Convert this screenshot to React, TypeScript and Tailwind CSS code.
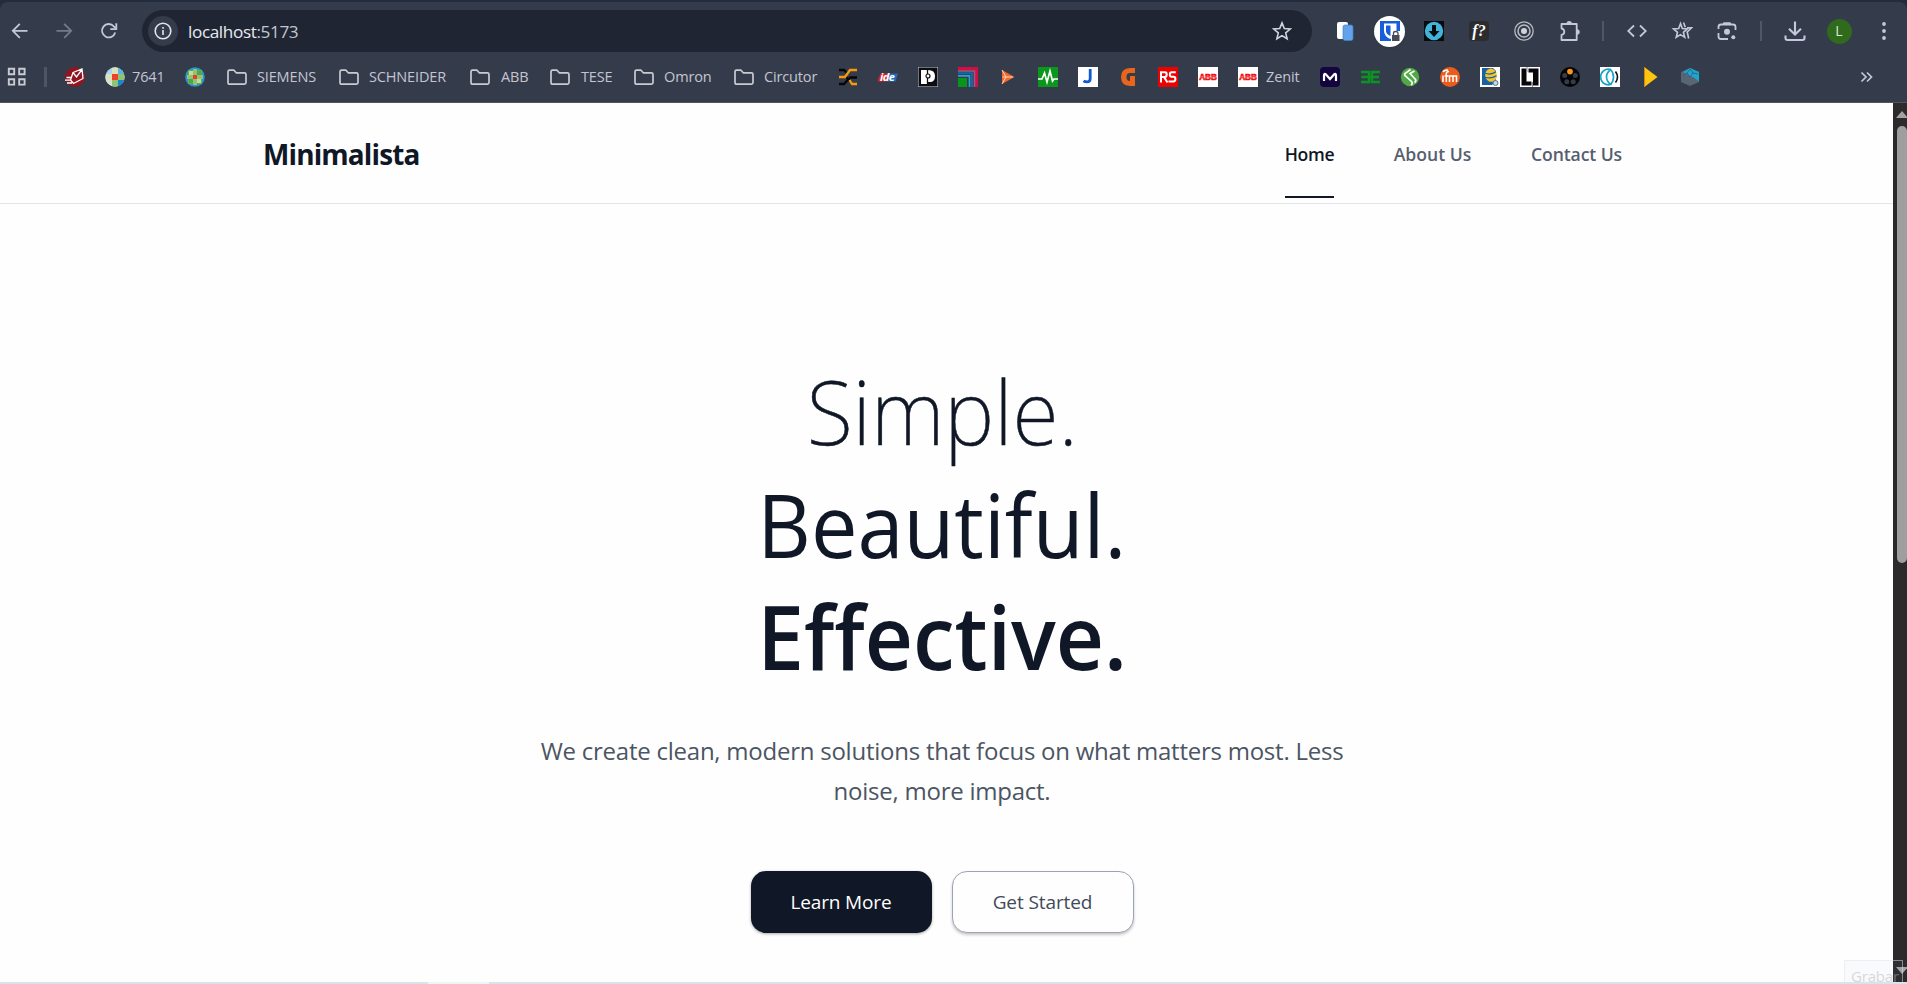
import type { ReactNode } from "react";

function Icon({ children, size = "size-5", box = "0 0 20 20" }: { children: ReactNode; size?: string; box?: string }) {
  return (
    <svg viewBox={box} className={`${size} shrink-0`} fill="none">
      {children}
    </svg>
  );
}

const pale = "#c3c8dc";
const soft = "#c9cbd2";

function FolderIcon() {
  return (
    <Icon>
      <path d="M1 14.8V4.8Q1 3.2 2.6 3.2H7l2.2 2.6h8.2Q19 5.8 19 7.4v8.2q0 1.6-1.6 1.6H2.6Q1 17.2 1 15.6z" stroke={soft} strokeWidth="1.7" strokeLinejoin="round" />
    </Icon>
  );
}

function MailBadge() {
  return (
    <Icon>
      <circle cx="10" cy="10" r="10" fill="#8f1620" />
      <path d="M8 5.500l9-3.500 1 9.500-9.500 5-3-3.500zM8 5.500l3.500 4.500L17 2.500M1.500 10.500h5M0 13.200h6M2 16h5" stroke="#fff" strokeWidth="1.3" />
    </Icon>
  );
}

function MosaicGlobe() {
  return (
    <Icon>
      <clipPath id="g1"><circle cx="10" cy="10" r="9.700" /></clipPath>
      <g clipPath="url(#g1)">
        <path d="M0 0h20v20H0z" fill="#a9d5f2" />
        <path d="M7 0h6v7H7zM0 7h7v6H0z" fill="#d9e2bd" />
        <path d="M13 0h7v7h-7z" fill="#58b5de" />
        <path d="M13 7h7v6h-7zM7 13h6v7H7z" fill="#8fc475" />
        <path d="M0 13h7v7H0z" fill="#d3e5cf" />
        <path d="M13 13h7v7h-7z" fill="#1688d2" />
        <path d="M7 7h6v6H7z" fill="#f0402c" />
      </g>
    </Icon>
  );
}

function GreenGlobe() {
  return (
    <Icon>
      <clipPath id="g2"><circle cx="10" cy="10" r="9.800" /></clipPath>
      <g clipPath="url(#g2)">
        <path d="M0 0h20v20H0z" fill="#2b93d4" />
        <path d="M3 3h14v14H3z" fill="#62ae4c" />
        <path d="M8 2h4v16H8zM2 8h16v4H2z" fill="#8fc475" />
        <path d="M4 4h4v4H4zM12 12h4v4h-4z" fill="#c5d9a0" />
        <path d="M4 12h4v4H4zM12 4h4v4h-4z" fill="#4fa548" />
        <path d="M8 8h4v4H8z" fill="#ee3c26" />
      </g>
    </Icon>
  );
}

function Wires() {
  return (
    <Icon>
      <path d="M1 3h5l3 3M1 17h5l6-6.500h7M8 10l4 4" stroke="#050505" strokeWidth="2.300" />
      <path d="M1 10h6l5-7h7M11.500 13l2.500 4h5" stroke="#f79a0b" strokeWidth="2.300" />
    </Icon>
  );
}

function Ide() {
  return (
    <Icon>
      <path d="M2.500 6.500H12L9 14.500H-.5z" fill="#d8252b" />
      <path d="M11 6.500h9l-2.500 8H9z" fill="#1f6cb8" />
      <text x="2" y="14" fontSize="11" fontWeight="700" fontStyle="italic" fill="#fff" fontFamily="Open Sans, sans-serif" textLength="15">ide</text>
    </Icon>
  );
}

function LetterP() {
  return (
    <Icon>
      <path d="M0 0h20v20H0z" fill="#0b0d12" stroke="#d9dadc" />
      <path d="M3 3h6v14H3zM10 3q7 0 7 6t-5 6h-2z" fill="#fff" />
      <path d="M9.500 1v6m0 4v6" stroke="#0b0d12" strokeWidth="1.300" />
      <circle cx="10" cy="9" r="2" fill="#fff" stroke="#0b0d12" strokeWidth="1.200" />
    </Icon>
  );
}

function Corners() {
  return (
    <Icon>
      <path d="M0 0h20v20h-3V3H0z" fill="#d80c45" />
      <path d="M0 4h16.500v16" stroke="#9b5c7c" strokeWidth="1.600" />
      <path d="M0 6.300h14V20" stroke="#1766a5" strokeWidth="2" />
      <path d="M0 8.800h11.500V20" stroke="#22a3da" strokeWidth="1.700" />
      <path d="M0 11h9v9H0z" fill="#08951a" />
    </Icon>
  );
}

function OrangeArrow() {
  return (
    <Icon>
      <path d="M4 3l12.500 7L4 17z" fill="#ee6b2e" />
      <path d="M4.500 10H15M4 3l4 7-4 7" stroke="#ffd3ba" strokeWidth="1" />
    </Icon>
  );
}

function Pulse() {
  return (
    <Icon>
      <path d="M0 0h20v20H0z" fill="#0a971b" />
      <path d="M0 12h4l2.500-6L9 15l3-11 2.500 10 1.500-2h4" stroke="#fff" strokeWidth="1.700" />
    </Icon>
  );
}

function LetterJ() {
  return (
    <Icon>
      <path d="M0 0h20v20H0z" fill="#fff" />
      <path d="M12.200 2v9.500q0 3.300-3 3.300-2.500 0-3.700-1" stroke="#1358d3" strokeWidth="2.800" />
    </Icon>
  );
}

function LetterG() {
  return (
    <Icon>
      <path d="M17 1v5h-5Q8.500 6 8.500 10t3.500 4V9h5v10h-5Q3 18.500 3 10t9-9z" fill="#ea651c" />
    </Icon>
  );
}

function Rs() {
  return (
    <Icon>
      <path d="M0 0h20v20H0z" fill="#ee0000" />
      <path d="M3 15.500V5.200h4q1.700 0 1.700 2.300T7 10H3M6 10l3.500 5.500M17.800 5.200h-4q-2 0-2 2.300t2 2.300h1.600q2 0 2 2.300t-2 2.400H10.500" stroke="#fff" strokeWidth="2" />
    </Icon>
  );
}

function Abb() {
  return (
    <Icon>
      <path d="M0 0h20v20H0z" fill="#fff" />
      <text x="1.200" y="13.200" fontSize="9" fontWeight="700" fill="#ee1414" stroke="#ee1414" strokeWidth=".7" fontFamily="Liberation Sans, sans-serif" textLength="17.600" lengthAdjust="spacingAndGlyphs">ABB</text>
      <path d="M1 10h18" stroke="#fff" strokeWidth=".4" />
    </Icon>
  );
}

function LetterM() {
  return (
    <Icon>
      <rect width="20" height="20" rx="4" fill="#14053f" />
      <path d="M4 14V8.500Q4 6 6 7.500l4 4.500 4-4.500Q16 6 16 8.500V14" stroke="#fff" strokeWidth="2.200" />
    </Icon>
  );
}

function Be() {
  return (
    <Icon>
      <path d="M1 5h8v10H1M1.500 10H19M20 5h-8v10h8" stroke="#0b9324" strokeWidth="2.500" />
    </Icon>
  );
}

function GreenS() {
  return (
    <Icon>
      <circle cx="10" cy="10" r="9.200" fill="#50aa43" />
      <path d="M10.500 2.500L5 6.500q-1 1.500.5 2.500l6.500 6q1 1.500-1 3M14.500 4L10 6.500l5.500 6q1 1.500-1 3" stroke="#fff" strokeWidth="1.700" />
    </Icon>
  );
}

function Ifm() {
  return (
    <Icon>
      <circle cx="10" cy="10" r="10" fill="#ea5b1c" />
      <path d="M3 8.500V15M6.300 15V7.500Q6 4.500 9 4.500M4.500 9h4M9.500 15V9h7v6M13 9v6M3 5q1-2 5-2" stroke="#fff" strokeWidth="1.500" />
    </Icon>
  );
}

function BlueCoins() {
  return (
    <Icon>
      <path d="M0 0h20v20H0z" fill="#fff" />
      <path d="M2 1h11l3 3v10l-4 4H2z" fill="#1662a5" />
      <ellipse cx="11" cy="8.200" rx="5.800" ry="6.700" fill="#f6c22b" transform="rotate(-12 11 8.200)" />
      <path d="M5 6.300q6 2 11-1.500M5 10.200q6 2 11.500-1.500" stroke="#1662a5" strokeWidth="1.200" />
      <circle cx="15.500" cy="16" r="2.500" fill="#c9d6e2" stroke="#54789b" />
    </Icon>
  );
}

function BlackBrackets() {
  return (
    <Icon>
      <path d="M0 0h20v20H0z" fill="#fff" />
      <path d="M1.500 1.500h5v13h5v4h-10zM8.500 1.500h10v17H13v-13H8.500z" fill="#08080c" />
      <path d="M7 0v5M12.500 15v5" stroke="#8b8b90" />
    </Icon>
  );
}

function Reel() {
  return (
    <Icon>
      <circle cx="10" cy="10" r="10" fill="#040406" />
      <circle cx="10" cy="4.600" r="2.900" fill="#f7941d" />
      <g fill="#343c4b">
        <circle cx="4.700" cy="8.600" r="2.500" />
        <circle cx="15.300" cy="8.600" r="2.500" />
        <circle cx="6.800" cy="14.700" r="2.500" />
        <circle cx="13.200" cy="14.700" r="2.500" />
      </g>
    </Icon>
  );
}

function Crescent() {
  return (
    <Icon>
      <path d="M0 0h20v20H0z" fill="#fff" />
      <path d="M10.500 2.500a7.800 7.800 0 1 0 0 15Q6.500 14 6.500 10t4-7.500Q13.500 5.500 13.500 10t-3 7.500" stroke="#1ba3c6" strokeWidth="1.700" />
      <path d="M15.500 4.500q4 5.500 0 11" stroke="#0d1014" strokeWidth="1.600" />
    </Icon>
  );
}

function YellowPlay() {
  return (
    <Icon>
      <path d="M4.300 0L17.500 10 4.300 20z" fill="#fcc50f" />
      <path d="M4.500 0v20" stroke="#e07f16" strokeWidth="1" />
    </Icon>
  );
}

function Cube() {
  return (
    <Icon>
      <path d="M10 1l9 4v10l-9 4-9-4V5z" fill="#586574" />
      <path d="M10 1l9 4v9.500l-6-4.500-3-1-7-4z" fill="#1ea5c9" />
      <path d="M3 9l4-3 3 4 3-4 5 1M7 6l3-4 3 4" stroke="#2b5b8c" strokeWidth=".8" />
    </Icon>
  );
}

const bookmarks: { icon: ReactNode; label?: string; gap?: string; width: string }[] = [
  { icon: <MailBadge />, width: "w-10" },
  { icon: <MosaicGlobe />, label: "7641", gap: "gap-[7px]", width: "w-20" },
  { icon: <GreenGlobe />, width: "w-[42px]" },
  { icon: <FolderIcon />, label: "SIEMENS", gap: "gap-[10px]", width: "w-28" },
  { icon: <FolderIcon />, label: "SCHNEIDER", gap: "gap-[10px]", width: "w-[131px]" },
  { icon: <FolderIcon />, label: "ABB", gap: "gap-[11px]", width: "w-20" },
  { icon: <FolderIcon />, label: "TESE", gap: "gap-[11px]", width: "w-[84px]" },
  { icon: <FolderIcon />, label: "Omron", gap: "gap-[10px]", width: "w-[100px]" },
  { icon: <FolderIcon />, label: "Circutor", gap: "gap-[10px]", width: "w-[104px]" },
  { icon: <Wires />, width: "w-10" },
  { icon: <Ide />, width: "w-10" },
  { icon: <LetterP />, width: "w-10" },
  { icon: <Corners />, width: "w-10" },
  { icon: <OrangeArrow />, width: "w-10" },
  { icon: <Pulse />, width: "w-10" },
  { icon: <LetterJ />, width: "w-10" },
  { icon: <LetterG />, width: "w-10" },
  { icon: <Rs />, width: "w-10" },
  { icon: <Abb />, width: "w-10" },
  { icon: <Abb />, label: "Zenit", gap: "gap-2", width: "w-[82px]" },
  { icon: <LetterM />, width: "w-10" },
  { icon: <Be />, width: "w-10" },
  { icon: <GreenS />, width: "w-10" },
  { icon: <Ifm />, width: "w-10" },
  { icon: <BlueCoins />, width: "w-10" },
  { icon: <BlackBrackets />, width: "w-10" },
  { icon: <Reel />, width: "w-10" },
  { icon: <Crescent />, width: "w-10" },
  { icon: <YellowPlay />, width: "w-10" },
  { icon: <Cube />, width: "w-10" },
];

function Slot({ width, children }: { width: string; children: ReactNode }) {
  return <div className={`flex shrink-0 items-center justify-center ${width}`}>{children}</div>;
}

function AddressRow() {
  return (
    <div className="flex h-[42px] items-center">
      <Slot width="w-[39px]">
        <Icon><path d="M17.500 9.800H3M9.800 2.800L2.800 9.800l7 7" stroke={pale} strokeWidth="1.800" /></Icon>
      </Slot>
      <Slot width="w-[50px]">
        <Icon><path d="M2.500 9.800H17M10.200 2.800l7 7-7 7" stroke="#727b8d" strokeWidth="1.800" /></Icon>
      </Slot>
      <Slot width="w-[40px]">
        <Icon>
          <path d="M16.200 11.500A6.700 6.700 0 1 1 14.800 5.300L16.500 7" stroke={pale} strokeWidth="1.800" />
          <path d="M17.300 2.200v6h-6" stroke={pale} strokeWidth="1.800" />
        </Icon>
      </Slot>
      <div className="ml-[13px] flex h-[42px] w-[1170px] shrink-0 items-center rounded-full bg-[#1f2533] pr-5 pl-[6px]">
        <div className="flex size-[30px] items-center justify-center rounded-full bg-[#343c4b]">
          <Icon size="size-[18px]" box="0 0 18 18">
            <circle cx="9" cy="9" r="7.800" stroke="#e3e5ec" strokeWidth="1.600" />
            <path d="M9 8v5M9 5v1.700" stroke="#e3e5ec" strokeWidth="1.600" />
          </Icon>
        </div>
        <div className="mt-px ml-[10px] text-[17.2px] leading-none tracking-[-0.4px] text-[#e8eaf0]">
          localhost<span className="text-[#c3c6d0]">:5173</span>
        </div>
        <div className="ml-auto">
          <Icon><path d="M10 1.900l2.300 5.600 6 .5-4.600 3.900 1.400 5.900L10 14.600l-5.100 3.200 1.400-5.900L1.700 8l6-.5z" stroke="#d2d4dc" strokeWidth="1.600" /></Icon>
        </div>
      </div>
      <div className="flex items-center pl-[10px]">
        <Slot width="w-[45px]">
          <Icon>
            <rect x="2" y="1" width="11" height="17" rx="2" fill="#fff" />
            <rect x="8" y="4" width="10" height="15.500" rx="2" fill="#62a3ea" stroke="#3c82cf" strokeWidth=".7" />
          </Icon>
        </Slot>
        <Slot width="w-[45px]">
          <div className="flex size-[31px] items-center justify-center rounded-full bg-white shadow">
            <Icon>
              <path d="M0 0h20v20H0z" fill="#175ddc" />
              <path d="M4 2.500h12.500V10q0 5-6.300 8Q4 15 4 10z" fill="#fff" />
              <path d="M6 4.500h4.500V15Q6 13 6 10z" fill="#175ddc" />
              <path d="M11 10h9v10h-9z" fill="#fff" />
              <rect x="12" y="14" width="7.500" height="6" fill="#494a58" />
              <path d="M13.500 14v-2q0-1.500 2.200-1.500T18 12v2" stroke="#494a58" strokeWidth="1.300" />
            </Icon>
          </div>
        </Slot>
        <Slot width="w-[44px]">
          <Icon>
            <path d="M0 0h20v20H0z" fill="#050a0d" />
            <circle cx="10" cy="10" r="9.200" fill="#41b5d9" />
            <path d="M8 4h4v6h3.500L10 16 4.500 10H8z" fill="#050a0d" />
          </Icon>
        </Slot>
        <Slot width="w-[46px]">
          <div className="flex size-5 items-center justify-center rounded bg-[#2c2c2e] font-['Liberation_Serif',serif] text-[16px] leading-none font-bold text-white italic">f?</div>
        </Slot>
        <Slot width="w-[44px]">
          <Icon>
            <circle cx="10" cy="10" r="9.200" stroke="#b8bbc2" strokeWidth="1.300" />
            <circle cx="10" cy="10" r="6" stroke="#b8bbc2" strokeWidth="1.500" />
            <circle cx="10" cy="10" r="3" fill="#d0d2d6" />
          </Icon>
        </Slot>
        <Slot width="w-[48px]">
          <Icon size="size-[22px]" box="0 0 22 22">
            <path d="M2.500 4h15.200v16H2.500v-5q2.800-.5 2.800-3.200T2.500 8.500z" stroke={pale} strokeWidth="1.800" strokeLinejoin="round" />
            <path d="M7.500 3.700a2.700 2.700 0 0 1 5.400 0zM18 9.300a2.700 2.700 0 0 1 0 5.400z" fill={pale} />
          </Icon>
        </Slot>
        <Slot width="w-[18px]"><div className="h-5 w-[2px] bg-[#505868]" /></Slot>
        <Slot width="w-[50px]">
          <Icon><path d="M7 4.500L1.200 10 7 15.500M13 4.500l5.800 5.500-5.800 5.500" stroke={pale} strokeWidth="1.800" /></Icon>
        </Slot>
        <Slot width="w-[40px]">
          <Icon size="size-[22px]" box="0 0 22 22">
            <path d="M9.500 3.500l1.800 5 5 .4-3.900 3.400 1.300 5-4.200-2.700-4.300 2.700 1.300-5L2.500 8.900l5.200-.4z" stroke={pale} strokeWidth="1.600" />
            <path d="M12.500 2.500l1.800 4.800M16 7.800h4.500l-4.300 4.200 1.500 6.500" stroke={pale} strokeWidth="1.600" />
          </Icon>
        </Slot>
        <Slot width="w-[50px]">
          <Icon>
            <path d="M1.500 8V6q0-2.500 2.500-2.500h12q2.500 0 2.500 2.500v3M1.500 12v3.500q0 2.500 2.500 2.500h7" stroke={pale} strokeWidth="1.800" />
            <path d="M5.500 3.500l1-2.200h7l1 2.200z" fill={pale} />
            <circle cx="10" cy="10.800" r="3" fill={pale} />
            <circle cx="16.300" cy="16.300" r="2" fill={pale} />
          </Icon>
        </Slot>
        <Slot width="w-[18px]"><div className="h-5 w-[2px] bg-[#505868]" /></Slot>
        <Slot width="w-[50px]">
          <Icon size="size-[22px]" box="0 0 22 22">
            <path d="M11 1.500v13M5 8.800l6 5.800 6-5.800M1.500 15.500v2.500q0 2 2 2h15q2 0 2-2v-2.500" stroke={pale} strokeWidth="2.100" />
          </Icon>
        </Slot>
        <Slot width="w-[38px]">
          <div className="flex size-[25px] items-center justify-center rounded-full bg-[#306a1d] text-[14px] leading-none text-[#dfe8d8]">L</div>
        </Slot>
        <Slot width="w-[52px]">
          <Icon>
            <g fill={pale}><circle cx="10" cy="3" r="1.900" /><circle cx="10" cy="10" r="1.900" /><circle cx="10" cy="17" r="1.900" /></g>
          </Icon>
        </Slot>
      </div>
    </div>
  );
}

function BookmarksRow() {
  return (
    <div className="flex h-[50px] items-center pl-[7px]">
      <Icon>
        <path d="M1.800 1.800h5.400v5.400H1.800zM12.200 1.800h5.400v5.400h-5.400zM1.800 12.200h5.400v5.400H1.800zM12.200 12.200h5.400v5.400h-5.400z" stroke={soft} strokeWidth="1.900" />
      </Icon>
      <div className="mr-[18px] ml-[17px] h-5 w-[3px] shrink-0 bg-[#4e5563]" />
      {bookmarks.map((b, i) => (
        <div key={i} className={`flex shrink-0 items-center ${b.width} ${b.gap ?? ""}`}>
          {b.icon}
          {b.label && <span className="mt-px text-[14.5px] leading-none tracking-[-0.15px] whitespace-nowrap text-[#c5c5d2]">{b.label}</span>}
        </div>
      ))}
      <div className="ml-[137px]">
        <Icon><path d="M4.500 5.500L9 10l-4.500 4.500M10 5.500l4.500 4.500-4.500 4.500" stroke={pale} strokeWidth="1.700" /></Icon>
      </div>
    </div>
  );
}

export default function App() {
  return (
    <div className="relative flex h-[984px] w-[1907px] flex-col overflow-hidden bg-[#fefefe] font-['Open_Sans',sans-serif]">
      <div className="h-[103px] shrink-0 border-b border-[#51555e] bg-[#232c3c] pt-[2px]">
        <div className="h-[100px] rounded-t-lg bg-[#343c4b] pt-2">
          <AddressRow />
          <BookmarksRow />
        </div>
      </div>

      <div className="flex min-h-0 flex-1">
        <div className="flex w-[1893px] flex-col">
          <header className="flex h-[101px] shrink-0 items-center justify-between border-b border-[#e4e5e7] pr-[271px] pl-[263px]">
            <div className="mt-[3px] origin-left scale-x-95 text-[29.4px] leading-none font-bold tracking-[-0.9px] text-[#101726]">Minimalista</div>
            <nav className="flex h-full text-[17.6px] font-semibold text-[#565f70]">
              <a className="mr-[60px] flex h-[95px] w-[49px] items-center justify-center border-b-2 border-[#101726] pt-[10px] tracking-[-0.3px] text-[#101726]">Home</a>
              <a className="mr-[60px] flex h-[95px] w-[77px] items-center justify-center pt-[8px] whitespace-nowrap">About Us</a>
              <a className="flex h-[95px] w-[91px] items-center justify-center pt-[8px] tracking-[-0.1px] whitespace-nowrap">Contact Us</a>
            </nav>
          </header>

          <main className="flex flex-col items-center pt-[151px] pr-[9px]">
            <h1 className="flex flex-col items-center text-[88px] leading-[112.5px] text-[#101726]">
              <span className="scale-x-[0.96] font-['Noto_Sans',sans-serif] font-extralight [-webkit-text-stroke:0.5px_#101726]">Simple.</span>
              <span className="scale-x-[0.942]">Beautiful.</span>
              <span className="scale-x-[0.952] font-semibold">Effective.</span>
            </h1>
            <p className="mt-[38px] w-[840px] text-center text-[24px] leading-10 tracking-[-0.24px] text-[#4b5563]">
              We create clean, modern solutions that focus on what matters most. Less noise, more impact.
            </p>
            <div className="mt-[60px] flex gap-5">
              <button className="h-[62px] w-[181px] rounded-[15px] bg-[#101726] pt-[2px] text-[19px] tracking-[-0.15px] text-white shadow-[0_1px_3px_rgba(0,0,0,0.35)]">Learn More</button>
              <button className="h-[62px] w-[182px] rounded-[15px] border border-[#9ca3b3] bg-[#fefefe] pt-[2px] text-[19px] tracking-[-0.1px] text-[#414a5a] shadow-[0_2px_3px_rgba(0,0,0,0.22)]">Get Started</button>
            </div>
          </main>
        </div>

        <div className="flex w-[14px] shrink-0 flex-col items-end bg-[#2c2a2b] pt-2">
          <svg viewBox="0 0 11 7" className="h-[7px] w-[11px]"><path d="M0 7L6 0l6 7z" fill="#a3a3a3" /></svg>
          <div className="mt-[8px] h-[437px] w-[10px] rounded-full bg-[#9f9f9f]" />
          <svg viewBox="0 0 11 7" className="mt-auto mb-[10px] h-[7px] w-[11px]"><path d="M0 0h12L6 7z" fill="#a3a3a3" /></svg>
        </div>
      </div>

      <div className="absolute top-[960px] left-[1844px] h-6 w-[59px] border border-b-0 border-[#dfe6f0]/50 bg-[#7890c8]/[0.04] pt-[9px] pl-[6px] text-[15px] leading-[12px] tracking-[-0.2px] text-[#b4b4b8]/50">Grabar</div>
      <div className="absolute bottom-0 left-0 flex h-[2px] w-full bg-[#d8e3eb]">
        <div className="ml-[428px] h-full w-[61px] bg-[#f0f4f5]" />
      </div>
    </div>
  );
}
